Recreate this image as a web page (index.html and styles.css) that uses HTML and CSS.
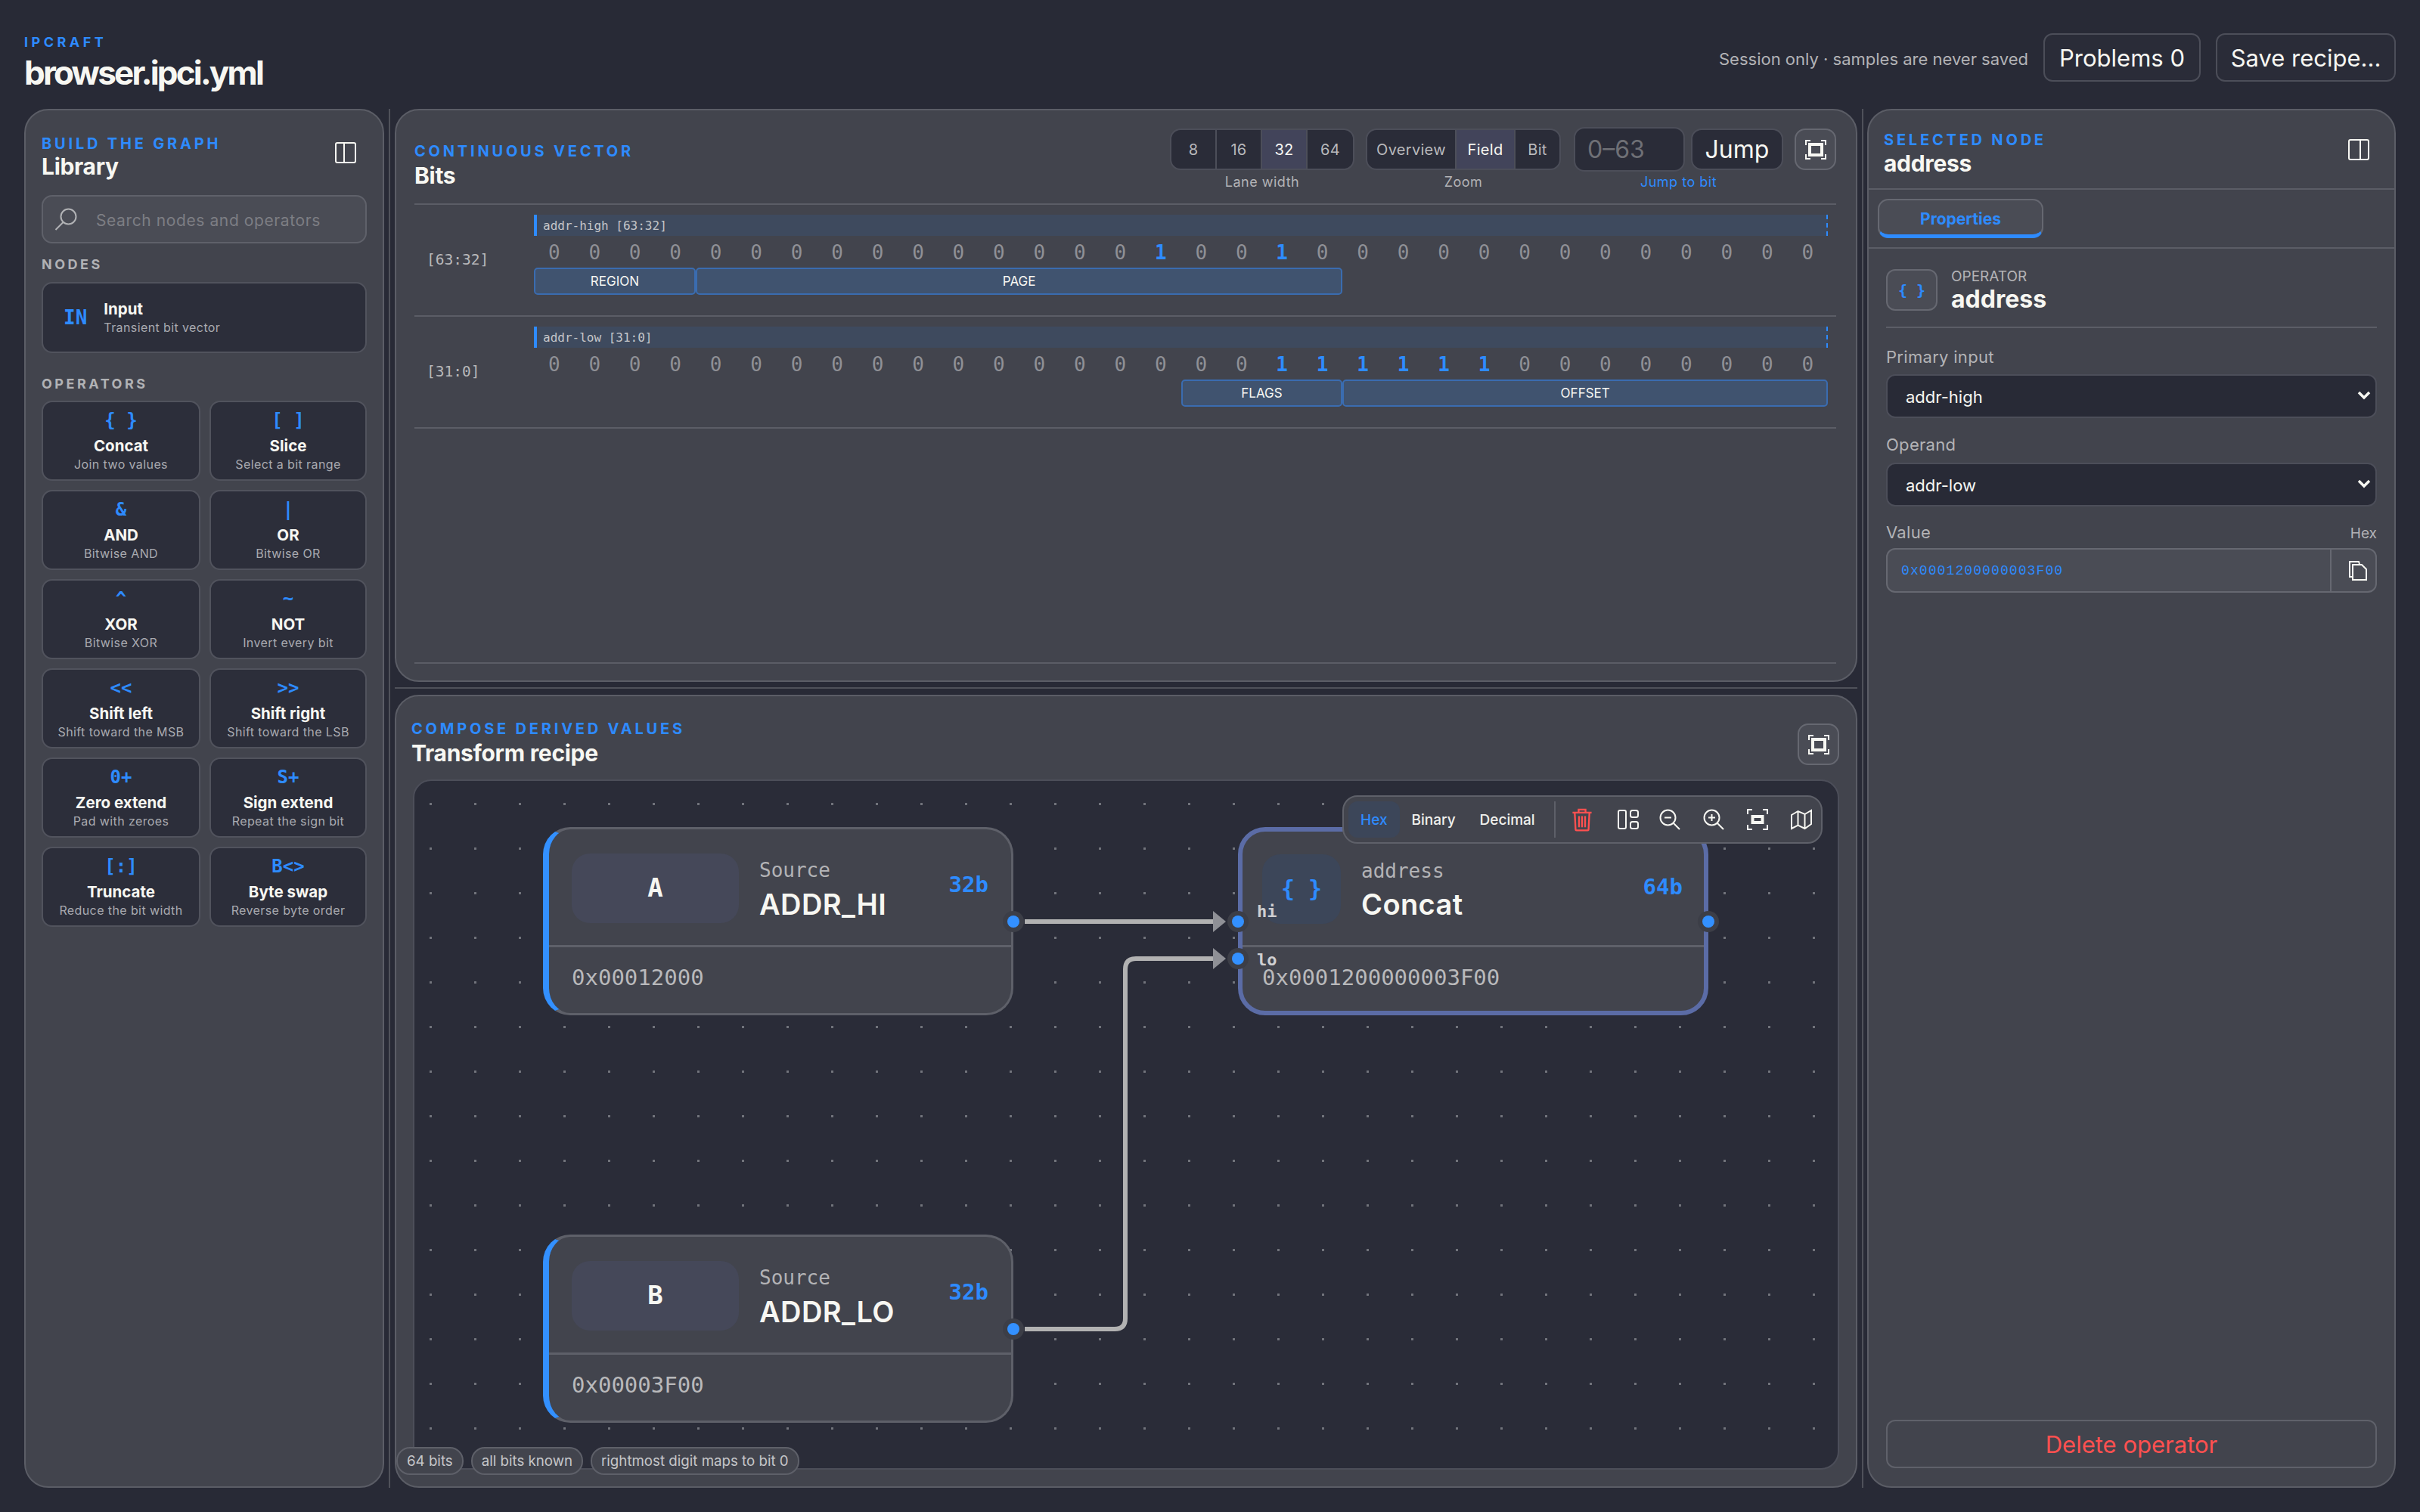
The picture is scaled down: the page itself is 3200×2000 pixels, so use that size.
FILE: index.html
```html
<!DOCTYPE html>
<html lang="en">
<head>
    <meta charset="UTF-8">
    <title>browser.ipci.yml</title>
    <link rel="stylesheet" href="styles.css">
</head>
<body>
    <header class="topbar">
        <div class="brand">
            <div class="brand-name">IPCRAFT</div>
            <h1>browser.ipci.yml</h1>
        </div>
        <div class="top-actions">
            <span class="session-note">Session only · samples are never saved</span>
            <button class="big-btn problems">Problems 0</button>
            <button class="big-btn save">Save recipe...</button>
        </div>
    </header>

    <main class="app">
        <!-- library -->
        <aside class="panel library">
            <div class="side-head">
                <div>
                    <div class="eyebrow">BUILD THE GRAPH</div>
                    <h2>Library</h2>
                </div>
                <svg class="dock-icon" viewBox="0 0 28 28"><rect x="1" y="1" width="26" height="26" rx="2"/><path d="M12 1v26"/></svg>
            </div>
            <div class="search">
                <svg viewBox="0 0 32 32"><circle cx="19.5" cy="12.5" r="10"/><path d="M12.5 20 2.500 30"/></svg>
                <input type="text" placeholder="Search nodes and operators">
            </div>
            <div class="group-label nodes-label">NODES</div>
            <div class="card input-card">
                <span class="symbol in-symbol">IN</span>
                <div>
                    <div class="card-title">Input</div>
                    <div class="card-sub">Transient bit vector</div>
                </div>
            </div>
            <div class="group-label ops-label">OPERATORS</div>
            <div class="op-grid">
                <div class="card op"><span class="symbol">{ }</span><div class="card-title">Concat</div><div class="card-sub">Join two values</div></div>
                <div class="card op"><span class="symbol">[ ]</span><div class="card-title">Slice</div><div class="card-sub">Select a bit range</div></div>
                <div class="card op"><span class="symbol">&amp;</span><div class="card-title">AND</div><div class="card-sub">Bitwise AND</div></div>
                <div class="card op"><span class="symbol">|</span><div class="card-title">OR</div><div class="card-sub">Bitwise OR</div></div>
                <div class="card op"><span class="symbol">^</span><div class="card-title">XOR</div><div class="card-sub">Bitwise XOR</div></div>
                <div class="card op"><span class="symbol">~</span><div class="card-title">NOT</div><div class="card-sub">Invert every bit</div></div>
                <div class="card op"><span class="symbol">&lt;&lt;</span><div class="card-title">Shift left</div><div class="card-sub">Shift toward the MSB</div></div>
                <div class="card op"><span class="symbol">&gt;&gt;</span><div class="card-title">Shift right</div><div class="card-sub">Shift toward the LSB</div></div>
                <div class="card op"><span class="symbol">0+</span><div class="card-title">Zero extend</div><div class="card-sub">Pad with zeroes</div></div>
                <div class="card op"><span class="symbol">S+</span><div class="card-title">Sign extend</div><div class="card-sub">Repeat the sign bit</div></div>
                <div class="card op"><span class="symbol">[:]</span><div class="card-title">Truncate</div><div class="card-sub">Reduce the bit width</div></div>
                <div class="card op"><span class="symbol">B&lt;&gt;</span><div class="card-title">Byte swap</div><div class="card-sub">Reverse byte order</div></div>
            </div>
        </aside>

        <div class="splitter-v"></div>

        <div class="center">
            <!-- bits -->
            <section class="panel bits-panel">
                <div class="bits-head">
                    <div class="bits-title">
                        <div class="eyebrow">CONTINUOUS VECTOR</div>
                        <h2>Bits</h2>
                    </div>
                    <div class="bits-tools">
                        <div class="tool-col">
                            <div class="seg">
                                <button class="lane-btn">8</button>
                                <button class="lane-btn">16</button>
                                <button class="lane-btn on">32</button>
                                <button class="lane-btn">64</button>
                            </div>
                            <span class="tool-label">Lane width</span>
                        </div>
                        <div class="tool-col">
                            <div class="seg">
                                <button class="zoom-overview">Overview</button>
                                <button class="zoom-field on">Field</button>
                                <button class="zoom-bit">Bit</button>
                            </div>
                            <span class="tool-label">Zoom</span>
                        </div>
                        <div class="tool-col jump-col">
                            <div class="jump-row">
                                <input class="jump-input" type="text" placeholder="0–63">
                                <button class="jump-btn">Jump</button>
                            </div>
                            <span class="tool-label jump-label">Jump to bit</span>
                        </div>
                        <button class="icon-btn">
                            <svg viewBox="0 0 28 26"><path class="thin" d="M1 7V1h6M21 1h6v6M27 19v6h-6M7 25H1v-6"/><rect class="thick" x="6" y="6" width="16" height="14"/></svg>
                        </button>
                    </div>
                </div>
                <div class="rows">
                    <div class="row">
                        <span class="row-label">[63:32]</span>
                        <div class="lane">
                            <div class="lane-bar"><span>addr-high [63:32]</span></div>
                            <span class="b">0</span><span class="b">0</span><span class="b">0</span><span class="b">0</span><span class="b">0</span><span class="b">0</span><span class="b">0</span><span class="b">0</span>
                            <span class="b">0</span><span class="b">0</span><span class="b">0</span><span class="b">0</span><span class="b">0</span><span class="b">0</span><span class="b">0</span><span class="b one">1</span>
                            <span class="b">0</span><span class="b">0</span><span class="b one">1</span><span class="b">0</span><span class="b">0</span><span class="b">0</span><span class="b">0</span><span class="b">0</span>
                            <span class="b">0</span><span class="b">0</span><span class="b">0</span><span class="b">0</span><span class="b">0</span><span class="b">0</span><span class="b">0</span><span class="b">0</span>
                            <div class="chip chip-region">REGION</div>
                            <div class="chip chip-page">PAGE</div>
                        </div>
                    </div>
                    <div class="row">
                        <span class="row-label">[31:0]</span>
                        <div class="lane">
                            <div class="lane-bar"><span>addr-low [31:0]</span></div>
                            <span class="b">0</span><span class="b">0</span><span class="b">0</span><span class="b">0</span><span class="b">0</span><span class="b">0</span><span class="b">0</span><span class="b">0</span>
                            <span class="b">0</span><span class="b">0</span><span class="b">0</span><span class="b">0</span><span class="b">0</span><span class="b">0</span><span class="b">0</span><span class="b">0</span>
                            <span class="b">0</span><span class="b">0</span><span class="b one">1</span><span class="b one">1</span><span class="b one">1</span><span class="b one">1</span><span class="b one">1</span><span class="b one">1</span>
                            <span class="b">0</span><span class="b">0</span><span class="b">0</span><span class="b">0</span><span class="b">0</span><span class="b">0</span><span class="b">0</span><span class="b">0</span>
                            <div class="chip chip-flags">FLAGS</div>
                            <div class="chip chip-offset">OFFSET</div>
                        </div>
                    </div>
                </div>
            </section>

            <div class="splitter-h"></div>

            <!-- recipe graph -->
            <section class="panel recipe-panel">
                <div class="recipe-head">
                    <div class="recipe-title">
                        <div class="eyebrow">COMPOSE DERIVED VALUES</div>
                        <h2>Transform recipe</h2>
                    </div>
                    <button class="icon-btn">
                        <svg viewBox="0 0 28 26"><path class="thin" d="M1 7V1h6M21 1h6v6M27 19v6h-6M7 25H1v-6"/><rect class="thick" x="6" y="6" width="16" height="14"/></svg>
                    </button>
                </div>
                <div class="canvas">
                    <svg class="wires" viewBox="0 0 1881 909">
                        <path d="M807 186H1056"/>
                        <path d="M807 725H926Q940 725 940 711V249Q940 235 954 235H1056"/>
                        <polygon points="1056,172 1073,186 1056,200"/>
                        <polygon points="1056,221 1073,235 1056,249"/>
                    </svg>

                    <div class="node source node-a">
                        <div class="node-head">
                            <div class="avatar">A</div>
                            <div class="node-names">
                                <div class="node-kind">Source</div>
                                <div class="node-name">ADDR_HI</div>
                            </div>
                            <div class="node-width">32b</div>
                        </div>
                        <div class="node-value">0x00012000</div>
                        <span class="port port-out"></span>
                    </div>

                    <div class="node source node-b">
                        <div class="node-head">
                            <div class="avatar">B</div>
                            <div class="node-names">
                                <div class="node-kind">Source</div>
                                <div class="node-name">ADDR_LO</div>
                            </div>
                            <div class="node-width">32b</div>
                        </div>
                        <div class="node-value">0x00003F00</div>
                        <span class="port port-out"></span>
                    </div>

                    <div class="node operator node-c">
                        <div class="node-head">
                            <div class="avatar">{ }</div>
                            <div class="node-names">
                                <div class="node-kind">address</div>
                                <div class="node-name">Concat</div>
                            </div>
                            <div class="node-width">64b</div>
                        </div>
                        <div class="node-value">0x0001200000003F00</div>
                        <span class="port port-hi"></span>
                        <span class="port port-lo"></span>
                        <span class="port port-out"></span>
                        <span class="port-name name-hi">hi</span>
                        <span class="port-name name-lo">lo</span>
                    </div>

                    <div class="graph-bar">
                        <button class="radix on">Hex</button>
                        <button class="radix">Binary</button>
                        <button class="radix">Decimal</button>
                        <span class="bar-sep"></span>
                        <svg class="tool-icon danger" viewBox="0 0 24 28"><path d="M1 6h22M8 6V2.500h8V6M3.500 6l1 19.500q0 1 1 1h13q1 0 1-1l1-19.500M8.500 10v13M12 10v13M15.500 10v13"/></svg>
                        <svg class="tool-icon layout" viewBox="0 0 28 26"><rect x="1" y="1" width="10" height="24" rx="2"/><rect x="17" y="1" width="10" height="9" rx="2.500"/><rect x="17" y="16" width="10" height="9" rx="2.500"/></svg>
                        <svg class="tool-icon" viewBox="0 0 28 28"><circle cx="11.500" cy="11.500" r="10"/><path d="M7 11.500h9M19 19l8 8"/></svg>
                        <svg class="tool-icon" viewBox="0 0 28 28"><circle cx="11.500" cy="11.500" r="10"/><path d="M7 11.500h9M11.500 7v9M19 19l8 8"/></svg>
                        <svg class="tool-icon" viewBox="0 0 28 28"><path d="M1 7V1h6M21 1h6v6M27 21v6h-6M7 27H1v-6"/><rect class="fit" x="7.500" y="10" width="13" height="8"/></svg>
                        <svg class="tool-icon" viewBox="0 0 28 26"><path d="M1 7 9.500 2 18.500 6 27 1v18l-8.500 6-9-4.500L1 25zM9.500 2v18.500M18.500 6v19"/></svg>
                    </div>
                </div>
                <div class="status-chips">
                    <span class="status">64 bits</span>
                    <span class="status">all bits known</span>
                    <span class="status">rightmost digit maps to bit 0</span>
                </div>
            </section>
        </div>

        <div class="splitter-v"></div>

        <!-- inspector -->
        <aside class="panel inspector">
            <div class="inspector-head">
                <div>
                    <div class="eyebrow">SELECTED NODE</div>
                    <h2>address</h2>
                </div>
                <svg class="dock-icon" viewBox="0 0 28 28"><rect x="1" y="1" width="26" height="26" rx="2"/><path d="M16 1v26"/></svg>
            </div>
            <div class="tab-strip">
                <button class="tab">Properties</button>
            </div>
            <div class="inspector-body">
                <div class="op-summary">
                    <div class="op-icon">{ }</div>
                    <div>
                        <div class="op-type">OPERATOR</div>
                        <div class="op-name">address</div>
                    </div>
                </div>
                <label class="field-label">Primary input</label>
                <div class="select">
                    <select><option>addr-high</option></select>
                    <svg viewBox="0 0 18 12"><path d="M2 2l7 7 7-7"/></svg>
                </div>
                <label class="field-label">Operand</label>
                <div class="select">
                    <select><option>addr-low</option></select>
                    <svg viewBox="0 0 18 12"><path d="M2 2l7 7 7-7"/></svg>
                </div>
                <div class="value-label">
                    <label class="field-label">Value</label>
                    <span class="value-radix">Hex</span>
                </div>
                <div class="value-box">
                    <span class="value-text">0x0001200000003F00</span>
                    <span class="copy-btn">
                        <svg viewBox="0 0 26 26"><path d="M5 21H2V1h12l1 3"/><path d="M6 5h12l6 6v14H6z"/></svg>
                    </span>
                </div>
                <button class="delete-btn">Delete operator</button>
            </div>
        </aside>
    </main>
</body>
</html>
```

FILE: styles.css
```css
* {
    margin: 0;
    padding: 0;
    box-sizing: border-box;
}

body {
    width: 3200px;
    height: 2000px;
    overflow: hidden;
    background-color: #282a36;
    color: #f7f7f2;
    font-family: Inter, "Noto Sans", sans-serif;
}

button, input, select {
    font-family: inherit;
    color: inherit;
}

h2 {
    font-size: 30px;
    font-weight: 700;
    line-height: 36px;
    letter-spacing: -0.3px;
    color: #f7f7f2;
}

.eyebrow {
    color: #2e8bff;
    font-size: 20px;
    line-height: 24px;
    font-weight: 700;
    letter-spacing: 3.8px;
}

/* top bar */
.topbar {
    height: 144px;
    padding: 0 32px;
    display: flex;
    justify-content: space-between;
}

.brand {
    padding-top: 46px;
}

.brand-name {
    color: #2e8bff;
    font-size: 18px;
    line-height: 20px;
    font-weight: 700;
    letter-spacing: 4.500px;
}

.brand h1 {
    margin-top: 4px;
    font-size: 44px;
    line-height: 52px;
    font-weight: 700;
    letter-spacing: -2.800px;
}

.top-actions {
    display: flex;
    align-items: flex-start;
    padding-top: 44px;
}

.session-note {
    margin-top: 20px;
    margin-right: 20px;
    font-size: 22px;
    line-height: 28px;
    color: #b3b3b6;
}

.big-btn {
    height: 64px;
    background-color: #2a2c38;
    border: 2px solid #4c4e59;
    border-radius: 12px;
    font-size: 31px;
    color: #f7f7f2;
}

.problems {
    width: 208px;
}

.save {
    width: 238px;
    margin-left: 20px;
}

/* main layout */
.app {
    height: 1824px;
    padding: 0 32px;
    display: grid;
    grid-template-columns: 476px 14px 1934px 13px 699px;
}

.panel {
    background-color: #42444d;
    border: 2px solid #5b5d66;
    border-radius: 32px;
}

.splitter-v {
    width: 2px;
    background-color: #4f515a;
    justify-self: center;
}

.splitter-h {
    height: 2px;
    margin: 7px 0 8px;
    background-color: #4f515a;
}

.center {
    display: flex;
    flex-direction: column;
    min-width: 0;
}

/* library */
.library {
    padding: 0 21px;
}

.side-head {
    height: 112px;
    padding-top: 32px;
    display: flex;
    justify-content: space-between;
}

.dock-icon {
    width: 28px;
    height: 28px;
    fill: none;
    stroke: #f7f7f2;
    stroke-width: 2;
}

.library .dock-icon {
    margin: 10px 14px 0 0;
}

.search {
    height: 64px;
    display: flex;
    align-items: center;
    gap: 24px;
    padding: 0 14px;
    background-color: #4a4c55;
    border: 2px solid #5f616a;
    border-radius: 14px;
}

.search svg {
    width: 32px;
    height: 32px;
    flex: none;
    fill: none;
    stroke: #b1b2b5;
    stroke-width: 2;
}

.search input {
    flex: 1;
    min-width: 0;
    padding-top: 2px;
    background: none;
    border: none;
    outline: none;
    font-size: 21px;
    letter-spacing: 0.6px;
}

.search input::placeholder {
    color: #7d7e84;
}

.group-label {
    color: #b1b2b5;
    font-size: 18px;
    line-height: 20px;
    font-weight: 700;
    letter-spacing: 3.500px;
}

.nodes-label {
    margin-top: 18px;
    margin-bottom: 13px;
}

.ops-label {
    margin-top: 31px;
    margin-bottom: 12px;
}

.card {
    background-color: #2c2e3a;
    border: 2px solid #51535d;
    border-radius: 14px;
}

.symbol {
    color: #2e8bff;
    font-family: "DejaVu Sans Mono", monospace;
    font-size: 24px;
    line-height: 30px;
    font-weight: 700;
}

.in-symbol {
    font-size: 26px;
}

.card-title {
    font-size: 20.500px;
    line-height: 26px;
    font-weight: 700;
    color: #f7f7f2;
}

.card-sub {
    font-size: 16px;
    line-height: 22px;
    letter-spacing: 0.4px;
    color: #a9aab0;
}

.input-card {
    height: 94px;
    display: flex;
    align-items: center;
    gap: 22px;
    padding-left: 27px;
}

.op-grid {
    display: grid;
    grid-template-columns: 210px 208px;
    grid-auto-rows: 106px;
    gap: 12px;
}

.op {
    display: flex;
    flex-direction: column;
    align-items: center;
    text-align: center;
    padding-top: 9px;
}

.op .card-title {
    margin-top: 6px;
}

/* bits */
.bits-panel {
    height: 758px;
    padding: 0 26px 0 24px;
    display: flex;
    flex-direction: column;
}

.bits-head {
    height: 123px;
    display: flex;
    justify-content: space-between;
}

.bits-title {
    padding-top: 42px;
}

.bits-title h2 {
    margin-top: 2px;
}

.bits-tools {
    display: flex;
    align-items: flex-start;
    gap: 15px;
    padding-top: 24px;
}

.tool-col {
    display: flex;
    flex-direction: column;
    align-items: center;
}

.jump-col {
    margin-left: 2px;
}

.tool-label {
    margin-top: 4px;
    font-size: 18px;
    line-height: 24px;
    letter-spacing: 0.5px;
    color: #b3b3b6;
}

.jump-label {
    color: #2e8bff;
}

.seg {
    height: 55px;
    display: flex;
    background-color: #2a2c38;
    border: 2px solid #4c4e59;
    border-radius: 14px;
    overflow: hidden;
}

.seg button {
    background: none;
    border: none;
    border-right: 2px solid #4c4e59;
    font-size: 20px;
    letter-spacing: 0.3px;
    color: #b9b9bc;
}

.seg button:last-child {
    border-right: none;
}

.seg .on {
    background-color: #42445a;
    color: #f7f7f2;
}

.lane-btn {
    width: 60px;
}

.zoom-overview {
    width: 118px;
}

.zoom-field {
    width: 78px;
}

.zoom-bit {
    width: 58px;
}

.jump-row {
    height: 55px;
    display: flex;
    align-items: center;
    gap: 8px;
}

.jump-input {
    width: 147px;
    height: 59px;
    padding-left: 16px;
    background-color: #2a2c38;
    border: 2px solid #4c4e59;
    border-radius: 14px;
    font-size: 32px;
    outline: none;
}

.jump-input::placeholder {
    color: #6f7076;
}

.jump-btn {
    width: 122px;
    height: 55px;
    background-color: #2a2c38;
    border: 2px solid #4c4e59;
    border-radius: 14px;
    font-size: 32px;
    color: #f7f7f2;
}

.icon-btn {
    width: 55px;
    height: 55px;
    display: flex;
    align-items: center;
    justify-content: center;
    background-color: #4a4c55;
    border: 2px solid #666871;
    border-radius: 14px;
}

.icon-btn svg {
    width: 28px;
    height: 26px;
    fill: none;
    stroke: #f7f7f2;
}

.icon-btn .thin {
    stroke-width: 2;
}

.icon-btn .thick {
    stroke-width: 4;
}

.rows {
    flex: 1;
    border-top: 2px solid #5b5d66;
    border-bottom: 2px solid #5b5d66;
    margin-bottom: 22px;
}

.row {
    height: 148px;
    display: grid;
    grid-template-columns: 158px 1711px;
    border-bottom: 2px solid #5b5d66;
}

.row-label {
    align-self: center;
    margin-top: -2px;
    padding-left: 16px;
    font-family: "DejaVu Sans Mono", monospace;
    font-size: 19.500px;
    color: #b8b8ba;
}

.lane {
    display: grid;
    grid-template-columns: repeat(32, 1fr);
    grid-template-rows: 28px 42px 36px;
    padding-top: 13px;
}

.lane-bar {
    grid-column: 1 / -1;
    display: flex;
    align-items: center;
    padding-left: 8px;
    background-color: #3e4a5e;
    border-left: 4px solid #2e8bff;
    border-right: 2px dashed #2e8bff;
    font-family: "DejaVu Sans Mono", monospace;
    font-size: 16px;
    color: #c5c6c9;
}

.b {
    padding-top: 2px;
    text-align: center;
    font-family: "DejaVu Sans Mono", monospace;
    font-size: 26px;
    line-height: 40px;
    color: #8f9096;
}

.b.one {
    color: #2e8bff;
    font-weight: 700;
}

.chip {
    display: flex;
    align-items: center;
    justify-content: center;
    background-color: #40536f;
    border: 2px solid #3a6cb0;
    border-radius: 5px;
    font-size: 17px;
    color: #f7f7f2;
}

.chip-region {
    grid-column: span 4;
}

.chip-page {
    grid-column: span 16;
}

.chip-flags {
    grid-column: 17 / span 4;
}

.chip-offset {
    grid-column: span 12;
}

/* recipe */
.recipe-panel {
    flex: 1;
    position: relative;
    padding: 0 22px 22px;
    display: flex;
    flex-direction: column;
}

.recipe-head {
    height: 110px;
    padding-top: 31px;
    display: flex;
    justify-content: space-between;
}

.recipe-title {
    margin-left: -2px;
}

.recipe-title h2 {
    margin-top: 2px;
}

.recipe-head .icon-btn {
    margin-top: 5px;
}

.canvas {
    flex: 1;
    position: relative;
    background-color: #2a2c38;
    background-image: radial-gradient(circle, #72747c 1.400px, transparent 1.800px);
    background-size: 59px 59px;
    background-position: -8px 1px;
    border: 2px solid #4c4e59;
    border-radius: 24px;
}

.wires {
    position: absolute;
    left: 0;
    top: 0;
    width: 1881px;
    height: 909px;
}

.wires path {
    fill: none;
    stroke: #b2b2b2;
    stroke-width: 6;
}

.wires polygon {
    fill: #8f9096;
}

.node {
    position: absolute;
    width: 622px;
    height: 249px;
    background-color: #42444d;
    border: 3px solid #5e6069;
    border-radius: 36px;
}

.node.source {
    border-left: 8px solid #3390ff;
}

.node-a {
    left: 170px;
    top: 61px;
}

.node-b {
    left: 170px;
    top: 600px;
}

.node-c {
    left: 1089px;
    top: 61px;
    border: 6px solid #5b6ca6;
}

.node-head {
    height: 156px;
    display: flex;
    align-items: flex-start;
    padding: 32px 30px 0 30px;
    border-bottom: 3px solid #5e6069;
}

.node-c .node-head {
    height: 153px;
    padding: 30px 28px 0 26px;
}

.avatar {
    width: 221px;
    height: 92px;
    flex: none;
    display: flex;
    align-items: center;
    justify-content: center;
    padding-bottom: 2px;
    background-color: #454859;
    border-radius: 24px;
    font-family: "DejaVu Sans Mono", monospace;
    font-size: 34px;
    font-weight: 700;
}

.node-c .avatar {
    width: 104px;
    background-color: #3c4659;
    color: #2e8bff;
    font-size: 30px;
}

.node-names {
    flex: 1;
    margin-left: 27px;
}

.node-kind {
    margin-top: 5px;
    font-family: "DejaVu Sans Mono", monospace;
    font-size: 26px;
    line-height: 34px;
    color: #b3b3b6;
}

.node-name {
    margin-top: 5px;
    font-size: 38px;
    line-height: 46px;
    font-weight: 600;
    letter-spacing: 0.4px;
    color: #f7f7f2;
}

.node-c .node-name {
    margin-top: 4px;
}

.node-width {
    margin-top: 24px;
    font-family: "DejaVu Sans Mono", monospace;
    font-size: 29px;
    line-height: 34px;
    font-weight: 700;
    color: #2e8bff;
}

.node-c .node-width {
    margin-top: 26px;
}

.node-value {
    padding: 20px 0 0 30px;
    font-family: "DejaVu Sans Mono", monospace;
    font-size: 29px;
    line-height: 40px;
    color: #b9b9bb;
}

.node-c .node-value {
    padding-left: 26px;
}

.port {
    position: absolute;
    width: 28px;
    height: 28px;
    background-color: #3c3e47;
    border-radius: 50%;
}

.port::after {
    content: "";
    position: absolute;
    left: 6px;
    top: 6px;
    width: 16px;
    height: 16px;
    background-color: #3390ff;
    border-radius: 50%;
}

.port-out {
    right: -17px;
    top: 108px;
}

.node-c .port-out {
    right: -20px;
    top: 105px;
}

.port-hi {
    left: -20px;
    top: 105px;
}

.port-lo {
    left: -20px;
    top: 154px;
}

.port-name {
    position: absolute;
    left: 19px;
    font-family: "DejaVu Sans Mono", monospace;
    font-size: 22px;
    line-height: 26px;
    font-weight: 700;
    color: #cfcfd1;
}

.name-hi {
    top: 93px;
}

.name-lo {
    top: 157px;
}

.graph-bar {
    position: absolute;
    left: 1227px;
    top: 19px;
    width: 635px;
    height: 64px;
    display: flex;
    align-items: center;
    padding-left: 6px;
    background-color: #42444d;
    border: 2px solid #5e6069;
    border-radius: 20px;
}

.radix {
    height: 48px;
    padding: 0 16px;
    background: none;
    border: none;
    border-radius: 12px;
    font-size: 19px;
    font-weight: 500;
    color: #f0f0ec;
}

.radix.on {
    background-color: #3c4659;
    color: #2e8bff;
}

.bar-sep {
    width: 2px;
    height: 48px;
    margin: 0 21px 0 9px;
    background-color: #5e6069;
}

.tool-icon {
    width: 28px;
    height: 28px;
    margin-right: 30px;
    flex: none;
    fill: none;
    stroke: #f7f7f2;
    stroke-width: 2;
}

.tool-icon:last-child {
    margin-right: 0;
}

.tool-icon.danger {
    stroke: #ff5050;
    height: 32px;
    margin-right: 33px;
}

.tool-icon.layout {
    margin-right: 27px;
}

.tool-icon .fit {
    stroke-width: 4;
}

.status-chips {
    position: absolute;
    left: 0;
    top: 993px;
    display: flex;
    gap: 10px;
}

.status {
    height: 37px;
    padding: 0 12px;
    display: flex;
    align-items: center;
    background-color: #42444d;
    border: 2px solid #5e6069;
    border-radius: 18px;
    font-size: 18.700px;
    color: #c5c6c9;
}

/* inspector */
.inspector {
    display: flex;
    flex-direction: column;
}

.inspector-head {
    height: 105px;
    padding: 27px 33px 0 20px;
    display: flex;
    justify-content: space-between;
    border-bottom: 2px solid #5b5d66;
}

.inspector-head h2 {
    margin-top: 1px;
}

.inspector .dock-icon {
    margin-top: 11px;
}

.tab-strip {
    height: 78px;
    padding: 12px 12px 0;
    border-bottom: 2px solid #5b5d66;
}

.tab {
    display: block;
    width: 219px;
    height: 52px;
    padding-top: 3px;
    background-color: #4a4c55;
    border: 2px solid #666871;
    border-bottom: 5px solid #2e8bff;
    border-radius: 14px;
    color: #2e8bff;
    font-size: 21px;
    font-weight: 700;
}

.inspector-body {
    flex: 1;
    display: flex;
    flex-direction: column;
    padding: 27px 23px 24px;
}

.op-summary {
    display: flex;
    align-items: flex-start;
    gap: 18px;
    height: 78px;
    border-bottom: 2px solid #5b5d66;
}

.op-icon {
    width: 68px;
    height: 55px;
    display: flex;
    align-items: center;
    justify-content: center;
    background-color: #4a4c55;
    border: 2px solid #666871;
    border-radius: 12px;
    font-family: "DejaVu Sans Mono", monospace;
    font-size: 20px;
    font-weight: 700;
    color: #2e8bff;
}

.op-type {
    font-size: 19px;
    line-height: 20px;
    color: #b3b3b6;
}

.op-name {
    font-size: 32px;
    line-height: 40px;
    font-weight: 700;
    color: #f7f7f2;
}

.field-label {
    display: block;
    font-size: 22px;
    line-height: 28px;
    letter-spacing: 0.3px;
    color: #b3b3b6;
}

.inspector-body > .field-label {
    margin-top: 21px;
    margin-bottom: 10px;
}

.inspector-body > .op-summary + .field-label {
    margin-top: 24px;
    margin-bottom: 9px;
}

.select {
    position: relative;
    height: 58px;
}

.select select {
    width: 100%;
    height: 100%;
    padding-left: 24px;
    padding-top: 2px;
    appearance: none;
    background-color: #282a36;
    border: 2px solid #4c4e59;
    border-radius: 12px;
    font-size: 22px;
    color: #f7f7f2;
    outline: none;
}

.select svg {
    position: absolute;
    right: 8px;
    top: 22px;
    width: 18px;
    height: 12px;
    fill: none;
    stroke: #f7f7f2;
    stroke-width: 3.500;
}

.value-label {
    display: flex;
    justify-content: space-between;
    align-items: baseline;
    margin-top: 20px;
    margin-bottom: 7px;
}

.value-radix {
    font-size: 19px;
    color: #b3b3b6;
}

.value-box {
    height: 59px;
    display: flex;
    align-items: center;
    background-color: #4a4c55;
    border: 2px solid #666871;
    border-radius: 12px;
}

.value-text {
    flex: 1;
    padding-left: 18px;
    font-family: "Liberation Mono", monospace;
    font-size: 18px;
    letter-spacing: 1.100px;
    color: #2e8bff;
}

.copy-btn {
    width: 60px;
    height: 100%;
    padding-left: 12px;
    display: flex;
    align-items: center;
    justify-content: center;
    border-left: 2px solid #666871;
}

.copy-btn svg {
    width: 26px;
    height: 26px;
    fill: none;
    stroke: #f7f7f2;
    stroke-width: 2;
}

.delete-btn {
    margin-top: auto;
    height: 64px;
    background: none;
    border: 2px solid #5f616a;
    border-radius: 12px;
    font-size: 31px;
    color: #ff5050;
}
```
